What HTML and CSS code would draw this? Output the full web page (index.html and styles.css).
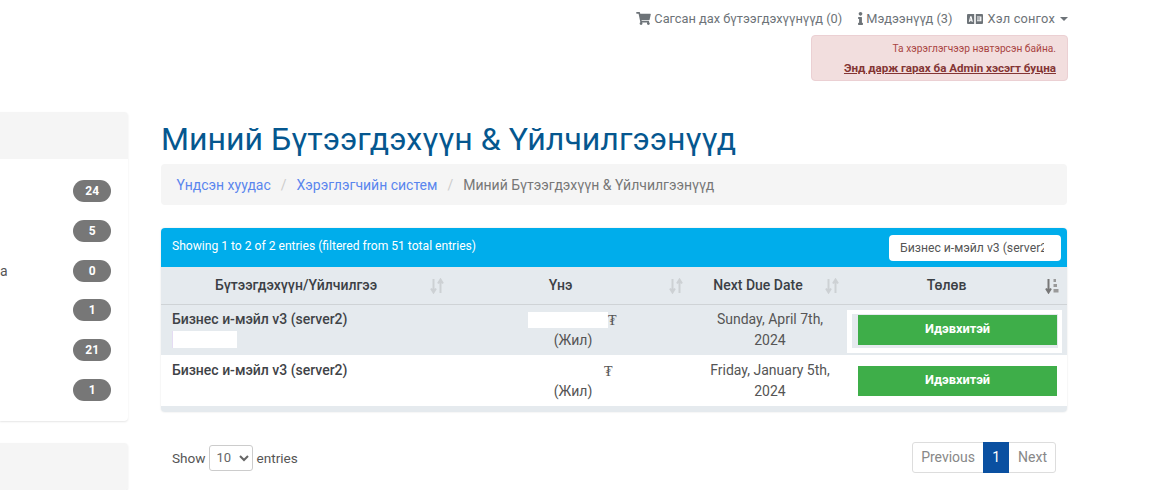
FILE: index.html
```html
<!DOCTYPE html>
<html lang="mn">
<head>
<meta charset="utf-8">
<title>Миний Бүтээгдэхүүн &amp; Үйлчилгээнүүд</title>
<link rel="stylesheet" href="styles.css">
</head>
<body>
<header class="top">
  <nav class="top-nav">
    <a class="top-link"><svg class="ic ic-cart" viewBox="0 0 576 512"><path d="M528.12 301.319l47.273-208C578.806 78.301 567.391 64 551.99 64H159.208l-9.166-44.81C147.758 8.021 137.93 0 126.529 0H24C10.745 0 0 10.745 0 24v16c0 13.255 10.745 24 24 24h69.883l70.248 343.435C147.325 417.1 136 435.222 136 456c0 30.928 25.072 56 56 56s56-25.072 56-56c0-15.674-6.447-29.835-16.824-40h209.647C430.447 426.165 424 440.326 424 456c0 30.928 25.072 56 56 56s56-25.072 56-56c0-22.172-12.888-41.332-31.579-50.405l5.517-24.276c3.413-15.018-8.002-29.319-23.403-29.319H218.117l-6.545-32h293.145c11.206 0 20.92-7.754 23.403-18.681z"/></svg>Сагсан дах бүтээгдэхүүнүүд (0)</a>
    <a class="top-link"><svg class="ic ic-info" viewBox="0 0 192 512"><path d="M20 424.229h20V279.771H20c-11.046 0-20-8.954-20-20V212c0-11.046 8.954-20 20-20h112c11.046 0 20 8.954 20 20v212.229h20c11.046 0 20 8.954 20 20V492c0 11.046-8.954 20-20 20H20c-11.046 0-20-8.954-20-20v-47.771c0-11.046 8.954-20 20-20zM96 0C56.235 0 24 32.235 24 72s32.235 72 72 72 72-32.235 72-72S135.764 0 96 0z"/></svg>Мэдээнүүд (3)</a>
    <a class="top-link top-lang"><svg class="ic ic-lang" viewBox="0 0 16 10"><path fill-rule="evenodd" d="M1 0h6.200v10H1a1 1 0 0 1-1-1V1a1 1 0 0 1 1-1zm3.500 2.200H3.200L1.800 7.800h1.300l.2-1h1.100l.2 1h1.300zM3.850 3.800l.3 1.900h-.6z"/><path fill-rule="evenodd" d="M8.800 0H15a1 1 0 0 1 1 1v8a1 1 0 0 1-1 1H8.800zM10 2.500v1h3.200v.9H10v1h3.200v.9H10v1h4.400v-4.800z"/></svg>Хэл сонгох<span class="caret"></span></a>
  </nav>
  <div class="admin-alert">
    <div class="admin-note">Та хэрэглэгчээр нэвтэрсэн байна.</div>
    <a class="admin-link">Энд дарж гарах ба Admin хэсэгт буцна</a>
  </div>
</header>

<div class="page">
  <aside class="side">
    <section class="side-card">
      <div class="side-head"></div>
      <ul class="side-list">
        <li class="side-row"><span></span><span class="badge">24</span></li>
        <li class="side-row"><span></span><span class="badge">5</span></li>
        <li class="side-row"><span class="side-label">a</span><span class="badge">0</span></li>
        <li class="side-row"><span></span><span class="badge">1</span></li>
        <li class="side-row"><span></span><span class="badge">21</span></li>
        <li class="side-row"><span></span><span class="badge">1</span></li>
      </ul>
    </section>
    <section class="side-card side-card-next">
      <div class="side-head"></div>
    </section>
  </aside>

  <main class="main">
    <h1 class="title">Миний Бүтээгдэхүүн &amp; Үйлчилгээнүүд</h1>
    <ol class="crumbs">
      <li><a class="crumb-link">Үндсэн хуудас</a></li>
      <li class="crumb-sep">/</li>
      <li><a class="crumb-link">Хэрэглэгчийн систем</a></li>
      <li class="crumb-sep">/</li>
      <li class="crumb-now">Миний Бүтээгдэхүүн &amp; Үйлчилгээнүүд</li>
    </ol>

    <section class="card">
      <div class="card-bar">
        <span class="card-info">Showing 1 to 2 of 2 entries (filtered from 51 total entries)</span>
        <input class="search" type="text" value="Бизнес и-мэйл v3 (server2)">
      </div>
      <table class="tbl">
        <colgroup>
          <col class="c1"><col class="c2"><col class="c3"><col class="c4">
        </colgroup>
        <thead>
          <tr>
            <th>Бүтээгдэхүүн/Үйлчилгээ
              <svg class="sort" viewBox="0 0 14 16"><path d="M3.500 1v13M1 10.500l2.500 4 2.500-4M10.500 15V2M8 5.500l2.500-4 2.500 4" fill="none" stroke-width="2"/></svg></th>
            <th>Үнэ
              <svg class="sort" viewBox="0 0 14 16"><path d="M3.500 1v13M1 10.500l2.500 4 2.500-4M10.500 15V2M8 5.500l2.500-4 2.500 4" fill="none" stroke-width="2"/></svg></th>
            <th>Next Due Date
              <svg class="sort" viewBox="0 0 14 16"><path d="M3.500 1v13M1 10.500l2.500 4 2.500-4M10.500 15V2M8 5.500l2.500-4 2.500 4" fill="none" stroke-width="2"/></svg></th>
            <th>Төлөв
              <svg class="sort sort-on" viewBox="0 0 14 16"><path d="M3.500 1v13M1 10.500l2.500 4 2.500-4" fill="none" stroke-width="2"/><path class="sort-bars" d="M8.500 1h2.500v3H8.500zM8.500 6h3.500v3H8.500zM8.500 11h5v3.500h-5z"/></svg></th>
          </tr>
        </thead>
        <tbody>
          <tr class="row-alt">
            <td class="name">Бизнес и-мэйл v3 (server2)<span class="mask mask-domain"></span></td>
            <td class="price"><span class="price-line"><span class="mask mask-price"></span><span class="tug">₮</span></span>(Жил)</td>
            <td class="date">Sunday, April 7th, 2024</td>
            <td class="status status-focus"><span class="status-ring"><span class="pill">Идэвхитэй</span></span></td>
          </tr>
          <tr>
            <td class="name">Бизнес и-мэйл v3 (server2)</td>
            <td class="price"><span class="price-line price-line-2"><span class="tug">₮</span></span>(Жил)</td>
            <td class="date">Friday, January 5th, 2024</td>
            <td class="status"><span class="pill">Идэвхитэй</span></td>
          </tr>
        </tbody>
      </table>
      <div class="card-foot"></div>
    </section>

    <div class="pager-row">
      <label class="len">Show
        <select class="len-select"><option>10</option></select>
        entries</label>
      <div class="pager">
        <a class="pg pg-prev">Previous</a>
        <a class="pg pg-on">1</a>
        <a class="pg pg-next">Next</a>
      </div>
    </div>
  </main>
</div>
</body>
</html>
```
FILE: styles.css
```css
* { box-sizing: border-box; }
html, body { margin: 0; padding: 0; height: 490px; overflow: hidden; background: #fff; }
body { font-family: Roboto, "Liberation Sans", sans-serif; font-size: 14px; color: #333; }
ul, ol { list-style: none; margin: 0; padding: 0; }

.top { display: flex; flex-direction: column; align-items: flex-end; padding: 10px 92px 0 0; height: 112px; }
.top-nav { display: flex; align-items: center; height: 17px; font-size: 12.800px; line-height: 17px; color: #6d7378; gap: 16px; }
.top-link { display: inline-flex; align-items: center; }
.top-lang { margin-left: -1px; letter-spacing: .2px; }
.ic { fill: #6d7378; display: block; }
.ic-cart { width: 15px; height: 13px; margin-right: 3px; }
.ic-info { width: 5px; height: 13px; margin-right: 3px; }
.ic-lang { width: 16px; height: 10px; margin-right: 4px; }
.caret { width: 0; height: 0; margin-left: 5px; border: 4.500px solid transparent; border-top-color: #6d7378; border-bottom: 0; }

.admin-alert { width: 257px; height: 46px; margin-top: 8px; padding: 3px 11px 0 0; text-align: right; background: #f2dede; border: 1px solid #ebd0d3; border-radius: 4px; color: #a94442; line-height: 19px; }
.admin-note { font-size: 10.200px; }
.admin-link { font-size: 11.600px; font-weight: 700; color: #843534; text-decoration: underline; }

.page { display: flex; align-items: flex-start; }
.side { width: 128px; flex: none; }
.side-card { background: #fff; border-radius: 0 4px 4px 0; box-shadow: 0 1px 2px rgba(0,0,0,.1); overflow: hidden; }
.side-card-next { margin-top: 22px; }
.side-head { height: 47px; background: #f5f5f5; }
.side-list { padding: 12.500px 0 11.500px; }
.side-row { display: flex; justify-content: space-between; align-items: center; height: 39.700px; padding-right: 17px; }
.side-label { color: #555; font-size: 14px; }
.badge { width: 38.500px; height: 22px; border-radius: 11px; background: #777; color: #fff; font-size: 12px; font-weight: 700; line-height: 22px; text-align: center; padding-left: 1px; }

.main { width: 906px; margin-left: 33px; flex: none; }
.title { margin: 0; height: 52px; padding-top: 8px; font-size: 32.100px; font-weight: 400; line-height: 38px; color: #05578f; white-space: nowrap; }
.crumbs { display: flex; align-items: center; height: 41px; padding-left: 15.500px; background: #f5f5f5; border-radius: 4px; font-size: 14px; }
.crumb-link { color: #5a86ee; }
.crumb-sep { padding: 0 10px; color: #ccc; }
.crumb-now { color: #777; }

.card { margin-top: 23px; border-radius: 4px; overflow: hidden; box-shadow: 0 0 2px rgba(0,0,0,.12); }
.card-bar { display: flex; align-items: flex-start; justify-content: space-between; height: 39px; padding: 7px 6px 0 11px; background: #00adeb; }
.card-info { color: #fff; font-size: 12.100px; line-height: 22px; }
.search { width: 172px; height: 26px; padding: 0 17px 0 11px; border: 0; border-radius: 4px; background: #fff; color: #555; font: 12.200px Roboto, sans-serif; }

.tbl { width: 906px; border-collapse: collapse; table-layout: fixed; }
.c1 { width: 290px; } .c2 { width: 239px; } .c3 { width: 156px; } .c4 { width: 221px; }
.tbl th { position: relative; height: 37px; padding: 0 20px 0 0; background: #e5eaee; border-bottom: 1px solid #cfd3d6; text-align: center; font-size: 14px; font-weight: 500; color: #3b4045; }
.sort { position: absolute; right: 7px; top: 11px; width: 14px; height: 16px; stroke: #cdd1d4; }
.sort-on { stroke: #777; right: 8px; }
.sort-bars { fill: #9a9a9a; stroke: none; }
.tbl td { height: 51px; padding: 4px 11px 0; vertical-align: top; line-height: 21px; font-size: 14px; color: #555; background: #fff; text-align: center; }
.row-alt td { background: #e5eaee; }
.tbl tr + tr td { height: 51px; padding-top: 5px; }
.tbl td.name { text-align: left; font-weight: 500; color: #3f4347; }
.mask { display: block; background: #fff; }
.mask-domain { width: 65px; height: 17px; margin-top: 1px; border-left: 1px solid #e5dcf3; }
.tbl td.price { padding: 4px 0 0 5px; }
.tbl tr + tr td.price { padding-top: 5px; }
.price-line { display: flex; align-items: center; height: 21px; padding-left: 72px; }
.price-line.price-line-2 { padding-left: 148px; }
.tug { color: #555; font-family: "DejaVu Serif", serif; font-size: 14px; margin-top: 2px; }
.mask-price { width: 80px; height: 16px; margin-top: 2px; }
.tbl td.date { padding-left: 14px; padding-right: 10px; }
.tbl td.status { padding: 11px 10px 0 12px; }
.tbl td.status-focus { position: relative; }
.status-ring { display: block; position: absolute; left: 1px; top: 5px; width: 215px; height: 43px; border: solid #fff; border-width: 4px 4px 5px 5px; background: #e5eaee; }
.status-ring .pill { margin: 1px 0 0 6px; width: 199px; }
.pill { display: block; height: 30px; background: #3eae49; color: #fff; font-size: 12.800px; font-weight: 700; line-height: 28px; text-align: center; }
.card-foot { height: 6px; background: #e5eaee; }

.pager-row { display: flex; align-items: center; justify-content: space-between; margin-top: 30px; padding: 0 11px; }
.len { display: flex; align-items: center; color: #555; font-size: 13.600px; gap: 3px; }
.len-select { width: 44px; height: 26px; margin-right: 1px; padding-left: 3px; border: 1px solid #ccc; border-radius: 3px; background: #fff; color: #666; font: 13px Roboto, sans-serif; }
.pager { display: flex; height: 31px; border: 1px solid #ddd; border-radius: 3px; }
.pg { display: block; padding: 0 8px; line-height: 29px; color: #888; font-size: 14px; }
.pg-next { padding-left: 9px; }
.pg-on { background: #0a50a1; color: #fff; width: 26px; padding: 0; text-align: center; margin: -1px 0; line-height: 31px; }
```
